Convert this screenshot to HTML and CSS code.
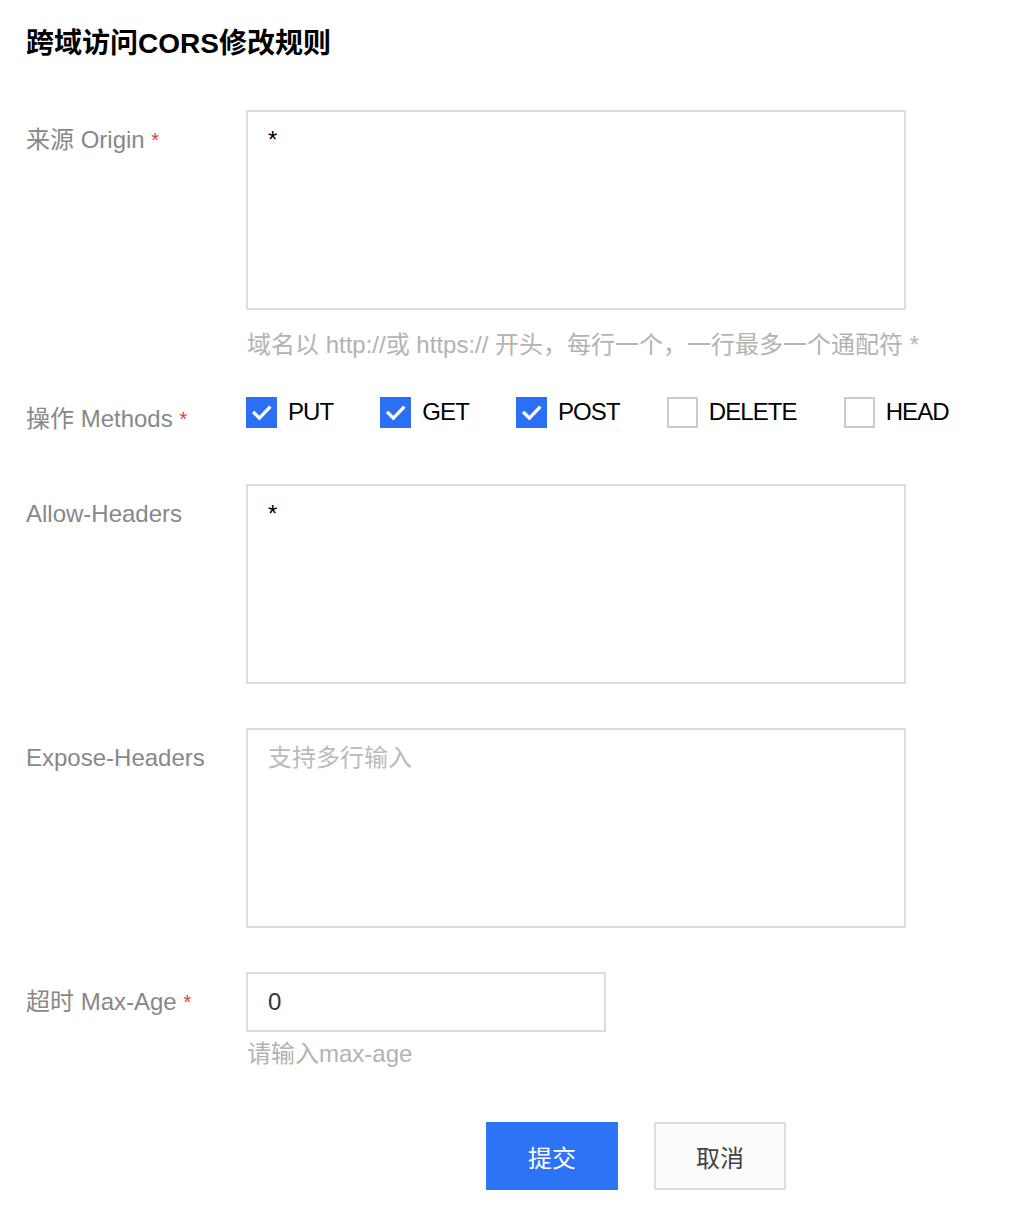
FILE: index.html
```html
<!DOCTYPE html>
<html lang="zh-CN">
  <head>
    <meta charset="UTF-8" />
    <meta name="viewport" content="width=device-width, initial-scale=1.0" />
    <title>跨域访问CORS修改规则</title>
    <link rel="stylesheet" href="styles.css">
  </head>
  <body>
    <div class="page">
      <h1 class="page-title">跨域访问CORS修改规则</h1>

      <form class="cors-form">
        <!-- Origin -->
        <div class="form-row row-origin">
          <label class="form-label">来源 Origin <span class="required">*</span></label>
          <div class="form-field">
            <textarea class="text-box">*</textarea>
            <p class="form-help">域名以 http://或 https:// 开头，每行一个，一行最多一个通配符 *</p>
          </div>
        </div>

        <!-- Methods -->
        <div class="form-row row-methods">
          <label class="form-label label-methods">操作 Methods <span class="required">*</span></label>
          <div class="check-group">
            <label class="check-item">
              <span class="check-box checked">
                <svg viewBox="0 0 30 30" width="30" height="30"><path d="M8 15.5l5 5 9.5-10" fill="none" stroke="#fff" stroke-width="3.2" stroke-linecap="square"/></svg>
              </span>
              PUT
            </label>
            <label class="check-item">
              <span class="check-box checked">
                <svg viewBox="0 0 30 30" width="30" height="30"><path d="M8 15.5l5 5 9.5-10" fill="none" stroke="#fff" stroke-width="3.2" stroke-linecap="square"/></svg>
              </span>
              GET
            </label>
            <label class="check-item">
              <span class="check-box checked">
                <svg viewBox="0 0 30 30" width="30" height="30"><path d="M8 15.5l5 5 9.5-10" fill="none" stroke="#fff" stroke-width="3.2" stroke-linecap="square"/></svg>
              </span>
              POST
            </label>
            <label class="check-item">
              <span class="check-box"></span>
              DELETE
            </label>
            <label class="check-item">
              <span class="check-box"></span>
              HEAD
            </label>
          </div>
        </div>

        <!-- Allow-Headers -->
        <div class="form-row row-allow">
          <label class="form-label">Allow-Headers</label>
          <div class="form-field">
            <textarea class="text-box">*</textarea>
          </div>
        </div>

        <!-- Expose-Headers -->
        <div class="form-row row-expose">
          <label class="form-label">Expose-Headers</label>
          <div class="form-field">
            <textarea class="text-box" placeholder="支持多行输入"></textarea>
          </div>
        </div>

        <!-- Max-Age -->
        <div class="form-row row-maxage">
          <label class="form-label">超时 Max-Age <span class="required">*</span></label>
          <div class="form-field">
            <input class="text-input" type="text" value="0" />
            <p class="form-help help-tight">请输入max-age</p>
          </div>
        </div>

        <div class="form-actions">
          <button type="button" class="btn btn-primary">提交</button>
          <button type="button" class="btn btn-default">取消</button>
        </div>
      </form>
    </div>
  </body>
</html>
```

FILE: styles.css
```css
body {
  margin: 0;
  background: #fff;
  font-family: "Liberation Sans", "Noto Sans CJK SC", sans-serif;
  color: #000;
}

.page {
  padding: 24px 26px 0;
}

.page-title {
  margin: 0;
  font-size: 28px;
  line-height: 40px;
  font-weight: bold;
  color: #000;
}

.cors-form {
  margin-top: 46px;
}

.form-row {
  display: grid;
  grid-template-columns: 220px 660px;
}

.row-origin {
  margin-bottom: 34px;
}
.row-methods {
  margin-bottom: 49px;
}
.row-allow,
.row-expose {
  margin-bottom: 44px;
}

.form-label {
  padding-top: 14px;
  font-size: 24px;
  line-height: 32px;
  color: #888;
  white-space: nowrap;
}

.label-methods {
  padding-top: 7px;
}

.required {
  color: #e0433a;
  font-size: 20px;
  vertical-align: top;
}

.text-box {
  display: block;
  box-sizing: border-box;
  width: 660px;
  height: 200px;
  margin: 0;
  padding: 12px 20px;
  border: 2px solid #ddd;
  border-radius: 0;
  font-family: inherit;
  font-size: 24px;
  line-height: 32px;
  color: #000;
  resize: none;
  outline: none;
}

.text-box::placeholder {
  color: #bbb;
}

.text-input {
  display: block;
  box-sizing: border-box;
  width: 360px;
  height: 60px;
  margin: 0;
  padding: 0 20px;
  border: 2px solid #ddd;
  border-radius: 0;
  font-family: inherit;
  font-size: 24px;
  color: #333;
  outline: none;
}

.form-help {
  margin: 18px 0 0 1px;
  font-size: 24px;
  line-height: 34px;
  color: #b3b3b3;
  white-space: nowrap;
}

.help-tight {
  margin-top: 6px;
  line-height: 32px;
}

/* checkbox row */
.check-group {
  display: flex;
  align-items: center;
  gap: 47px;
  height: 32px;
}

.check-item {
  display: flex;
  align-items: center;
  gap: 11px;
  font-size: 24px;
  line-height: 32px;
  letter-spacing: -0.9px;
  color: #000;
  white-space: nowrap;
}

.check-box {
  display: block;
  box-sizing: border-box;
  width: 31px;
  height: 31px;
  border: 2px solid #ccc;
  background: #fff;
}

.check-box.checked {
  border: none;
  background: #2b6ff5;
}

.check-box svg {
  display: block;
  width: 31px;
  height: 31px;
}

.form-actions {
  display: flex;
  gap: 36px;
  margin-top: 52px;
  padding-left: 460px;
}

.btn {
  box-sizing: border-box;
  width: 132px;
  height: 68px;
  border: none;
  border-radius: 0;
  font-family: inherit;
  font-size: 24px;
  cursor: pointer;
}

.btn-primary {
  background: #2d73f6;
  color: #fff;
}

.btn-default {
  background: #fbfbfc;
  border: 2px solid #ddd;
  color: #444;
}
```
